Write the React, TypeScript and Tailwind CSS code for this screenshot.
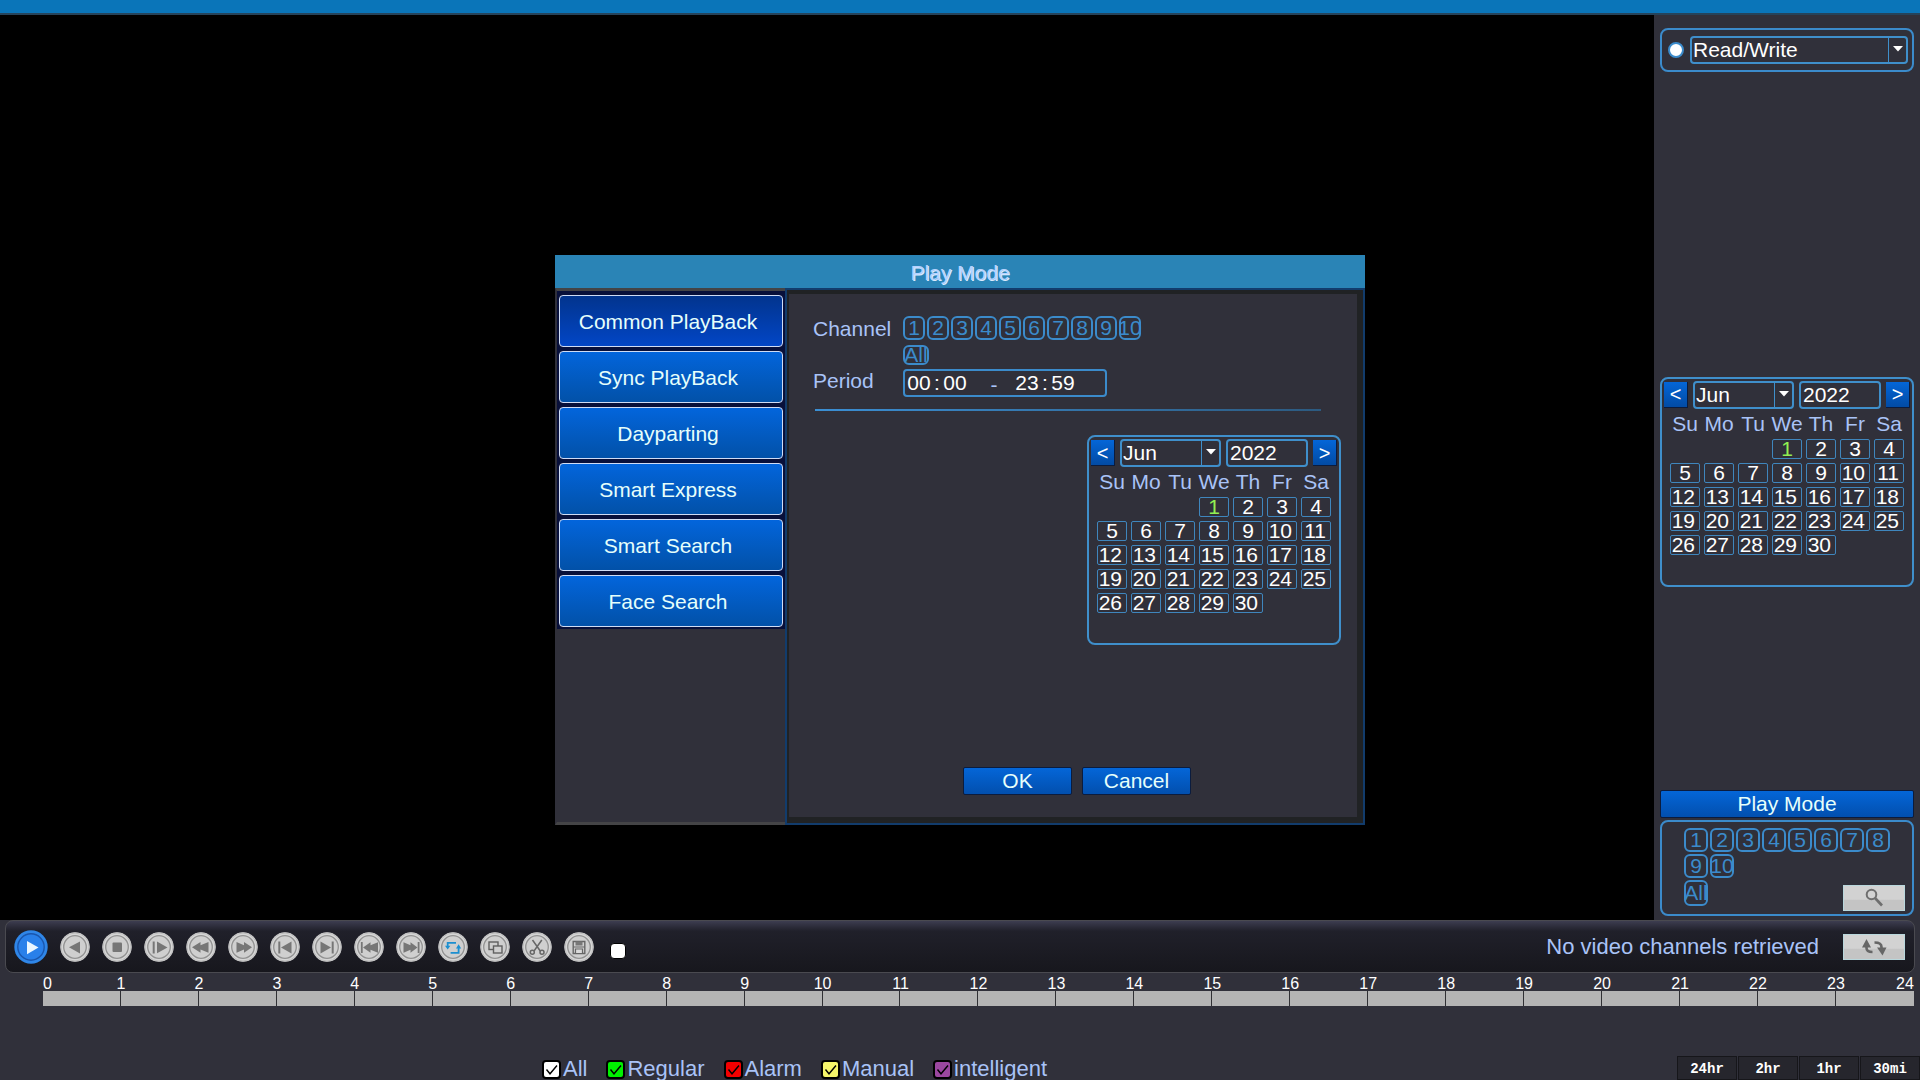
import React, { useState } from "react";

const MONTHS = ["Jan", "Feb", "Mar", "Apr", "May", "Jun", "Jul", "Aug", "Sep", "Oct", "Nov", "Dec"];
const WEEKDAYS = ["Su", "Mo", "Tu", "We", "Th", "Fr", "Sa"];
const WEEKS: (number | null)[][] = [
  [null, null, null, 1, 2, 3, 4],
  [5, 6, 7, 8, 9, 10, 11],
  [12, 13, 14, 15, 16, 17, 18],
  [19, 20, 21, 22, 23, 24, 25],
  [26, 27, 28, 29, 30, null, null],
];
const CHANNELS = ["1", "2", "3", "4", "5", "6", "7", "8", "9", "10"];
const MODES = ["Common PlayBack", "Sync PlayBack", "Dayparting", "Smart Express", "Smart Search", "Face Search"];
const HOURS = Array.from({ length: 24 }, (_, i) => i);

function Select({ label, options, value, className }: { label: string; options: string[]; value: string; className: string }) {
  return (
    <div className={`relative h-7 ${className}`}>
      <select
        aria-label={label}
        defaultValue={value}
        className="h-full w-full appearance-none rounded border-2 border-[#3f8fcb] bg-transparent pl-px text-[21px] leading-6 text-white outline-none"
      >
        {options.map((o) => (
          <option key={o} className="bg-[#30303a]">
            {o}
          </option>
        ))}
      </select>
      <span className="pointer-events-none absolute inset-y-0.5 right-0.5 flex w-[18px] items-center justify-center border-l border-[#3f8fcb]">
        <svg width="10" height="6" viewBox="0 0 10 6" className="-mt-0.5">
          <path d="M0 0h10L5 5.5z" fill="#fff" />
        </svg>
      </span>
    </div>
  );
}

function StepButton({ label, children }: { label: string; children: string }) {
  return (
    <button
      aria-label={label}
      className="flex h-[26px] w-6 items-center justify-center border-r border-b border-[#0b1c3e] bg-linear-to-b from-[#0466d8] to-[#024ba4] text-xl leading-6 text-white"
    >
      {children}
    </button>
  );
}

function Calendar() {
  return (
    <div className="h-[210px] w-[254px] rounded-lg border-2 border-[#3f8fcb] pt-0.5">
      <div className="flex items-center justify-between pr-0.5 pl-0.5">
        <StepButton label="Previous month">{"<"}</StepButton>
        <Select label="Month" options={MONTHS} value="Jun" className="w-[101px]" />
        <input
          aria-label="Year"
          defaultValue="2022"
          className="h-7 w-[82px] rounded border-2 border-[#3f8fcb] bg-transparent pl-0.5 text-[21px] leading-6 text-white outline-none"
        />
        <StepButton label="Next month">{">"}</StepButton>
      </div>
      <table className="ml-1 w-[242px] table-fixed border-separate border-spacing-1 text-[21px] leading-5">
        <thead>
          <tr>
            {WEEKDAYS.map((d) => (
              <th key={d} className="h-[22px] p-0 font-normal text-[#a9c3f7]">
                <span className="flex justify-center">{d}</span>
              </th>
            ))}
          </tr>
        </thead>
        <tbody>
          {WEEKS.map((week, i) => (
            <tr key={i}>
              {week.map((day, j) => (
                <td key={j} className="h-5 p-0">
                  {day !== null && (
                    <button
                      className={`flex h-5 w-full items-center justify-end rounded-xs border border-[#3f86bd] leading-5 ${
                        day === 1 ? "text-[#92f052]" : "text-white"
                      } ${day < 10 ? "pr-2" : "pr-1"}`}
                    >
                      {day}
                    </button>
                  )}
                </td>
              ))}
            </tr>
          ))}
        </tbody>
      </table>
    </div>
  );
}

function Chip({ label, className }: { label: string; className: string }) {
  const [on, setOn] = useState(false);
  return (
    <button
      aria-pressed={on}
      onClick={() => setOn(!on)}
      className={`flex items-center justify-center rounded-md border-2 border-[#3b8bcb] text-[21px] leading-5 text-[#3b8bcb] ${className}`}
    >
      {label}
    </button>
  );
}

function TimeField({ label, value }: { label: string; value: string }) {
  return (
    <input
      aria-label={label}
      defaultValue={value}
      className="h-6 w-6 bg-transparent text-center text-[21px] leading-6 text-white outline-none"
    />
  );
}

function PlayModeDialog() {
  return (
    <div role="dialog" aria-label="Play Mode" className="flex h-[570px] w-[810px] flex-col bg-[#30303a]">
      <h2 className="flex h-[33px] shrink-0 items-center justify-center bg-[#2a84b6] pt-0.5 text-[21px] text-[#b4d2ff] [text-shadow:1px_1px_0_#dcebff]">
        Play Mode
      </h2>
      <div className="flex grow">
        <div className="w-[230px] shrink-0 border-t-[3px] border-b-[3px] border-l-2 border-t-[#444446] border-b-[#444446] border-l-[#30303a]">
          <ul className="flex flex-col gap-1 bg-[#08103a] px-0.5 pt-1 pb-0.5">
            {MODES.map((m, i) => (
              <li key={m}>
                <button
                  className={`h-[52px] w-full rounded border border-[#cfdcf5] bg-linear-to-b pt-0.5 pr-1.5 text-[21px] leading-6 text-[#e6fffb] ${
                    i === 0 ? "from-[#02348e] to-[#0246c6]" : "from-[#0365dc] to-[#0251a8]"
                  }`}
                >
                  {m}
                </button>
              </li>
            ))}
          </ul>
        </div>
        <div className="flex grow flex-col border-2 border-[#123c6c]">
          <div className="flex grow flex-col border-t-4 border-r-[6px] border-b-[6px] border-l-2 border-[#202224] pt-[22px] pr-4 pb-[22px] pl-6">
            <div className="grid grid-cols-[90px_1fr] gap-y-1 text-[21px] leading-6 text-[#a9c3f7]">
              <span className="pt-px">Channel</span>
              <div className="flex h-6 gap-0.5">
                {CHANNELS.map((c) => (
                  <Chip key={c} label={c} className="h-6 w-[22px]" />
                ))}
              </div>
              <Chip label="All" className="col-start-2 h-5 w-[26px]" />
              <span>Period</span>
              <div className="flex h-7 w-[204px] items-center rounded border-2 border-[#3b8bcb] pl-0.5">
                <TimeField label="Start hour" value="00" />
                <span className="w-3 text-center text-white">:</span>
                <TimeField label="Start minute" value="00" />
                <span className="w-12 pt-1 pl-1.5 text-center">-</span>
                <TimeField label="End hour" value="23" />
                <span className="w-3 text-center text-white">:</span>
                <TimeField label="End minute" value="59" />
              </div>
            </div>
            <hr className="mt-3 mr-5 ml-0.5 h-0.5 border-0 bg-linear-to-r from-[#3b8fd4] to-[#2c5a80]" />
            <div className="mt-6 flex justify-end">
              <Calendar />
            </div>
            <div className="mt-auto flex justify-center gap-2.5">
              <button className="h-7 w-[109px] rounded-xs border border-[#0b1c3e] bg-linear-to-b from-[#0466d8] to-[#024fae] text-[21px] leading-6 text-[#e6fffb]">
                OK
              </button>
              <button className="h-7 w-[109px] rounded-xs border border-[#0b1c3e] bg-linear-to-b from-[#0466d8] to-[#024fae] text-[21px] leading-6 text-[#e6fffb]">
                Cancel
              </button>
            </div>
          </div>
        </div>
      </div>
    </div>
  );
}

const G = "#767676";
const CONTROLS: { label: string; glyph: React.ReactNode }[] = [
  { label: "Reverse", glyph: <path d="M9 15.3 20 9.6v11.8z" fill={G} /> },
  { label: "Stop", glyph: <rect x="10.5" y="10.5" width="9.5" height="9.5" rx="1" fill={G} /> },
  {
    label: "Slow play",
    glyph: (
      <>
        <path d="M9.7 9.5v12" stroke={G} strokeWidth="2" />
        <path d="M13 9.5 23.5 15.4 13 21.3z" fill={G} />
      </>
    ),
  },
  { label: "Rewind", glyph: <path d="M6 15.3 14.5 10v3.2L22.5 10v10.8l-8-3.2v3.2z" fill={G} /> },
  { label: "Fast forward", glyph: <path d="M24 15.3 16 10v3.2L8.5 10v10.8l7.5-3.2v3.2z" fill={G} /> },
  {
    label: "Previous frame",
    glyph: (
      <>
        <path d="M9.3 9.5v12" stroke={G} strokeWidth="2" />
        <path d="M11 15.4 21.5 9.6v11.8z" fill={G} />
      </>
    ),
  },
  {
    label: "Next frame",
    glyph: (
      <>
        <path d="M20.7 9.5v12" stroke={G} strokeWidth="2" />
        <path d="M19 15.4 8.5 9.6v11.8z" fill={G} />
      </>
    ),
  },
  {
    label: "Previous file",
    glyph: (
      <>
        <path d="M7.8 10v11" stroke={G} strokeWidth="1.8" />
        <path d="M9 15.4 16.5 10.2v3L24 10.2v10.5l-7.5-3v3z" fill={G} />
      </>
    ),
  },
  {
    label: "Next file",
    glyph: (
      <>
        <path d="M22.6 10v11" stroke={G} strokeWidth="1.8" />
        <path d="M21.5 15.4 14.5 10.2v3L7.5 10.2v10.5l7-3v3z" fill={G} />
      </>
    ),
  },
  {
    label: "Repeat",
    glyph: (
      <>
        <path d="M9.7 14v-3.2h8.3M20.6 16v4.8h-8" fill="none" stroke="#1c8fd0" strokeWidth="1.8" />
        <path d="M7 13.8h5.4L9.7 17.6zM18 16.4h5.2l-2.6-4.2z" fill="#1c8fd0" />
      </>
    ),
  },
  {
    label: "Full screen",
    glyph: (
      <>
        <rect x="9" y="10" width="9" height="7.5" fill="#cfcfcf" stroke="#606060" strokeWidth="1.4" />
        <rect x="13.5" y="14" width="8.5" height="7" fill="#cfcfcf" stroke="#606060" strokeWidth="1.4" />
      </>
    ),
  },
  {
    label: "Clip",
    glyph: (
      <g fill="none" stroke="#666" strokeWidth="1.5">
        <path d="M10.5 8 18.3 19M19.8 8 12 19" />
        <circle cx="10.3" cy="20.3" r="2" />
        <circle cx="20" cy="20.3" r="2" />
      </g>
    ),
  },
  {
    label: "Save",
    glyph: (
      <>
        <path d="M9.2 9.5h11.6v12H9.2z" fill="#cfcfcf" stroke="#666" strokeWidth="1.4" />
        <path d="M11.5 9.5h7v4h-7z" fill="#777" />
        <path d="M9.2 15h11.6M11.5 17h7v4.5h-7z" fill="#dadada" stroke="#666" strokeWidth="1.2" />
      </>
    ),
  },
];

function ControlButton({ label, glyph }: { label: string; glyph: React.ReactNode }) {
  return (
    <button aria-label={label} className="shrink-0">
      <svg width="30" height="30" viewBox="0 0 30 30">
        <circle cx="15" cy="15" r="14.7" fill="#d6d6d6" />
        <circle cx="15" cy="15" r="14" fill="none" stroke="#bcbcbc" strokeWidth="1" />
        <circle cx="15" cy="15" r="11.3" fill="#cfcfcf" stroke="#929292" strokeWidth="1.3" />
        {glyph}
      </svg>
    </button>
  );
}

function LegendItem({ label, box }: { label: string; box: string }) {
  return (
    <label className="flex items-center gap-0.5">
      <span className="relative flex">
        <input
          type="checkbox"
          defaultChecked
          className={`peer h-[19px] w-[19px] appearance-none rounded border-2 border-black ${box}`}
        />
        <svg width="19" height="19" viewBox="0 0 19 19" className="pointer-events-none absolute inset-0 hidden peer-checked:block">
          <path d="M4.5 9.5 8 13.8 15 5.5" fill="none" stroke="#000" strokeWidth="1.4" />
        </svg>
      </span>
      {label}
    </label>
  );
}

function Sidebar() {
  return (
    <aside className="flex w-[266px] shrink-0 flex-col bg-[#30303a] px-1.5 pt-[13px] pb-1">
      <div className="flex h-11 items-center gap-1.5 rounded-lg border-2 border-[#3b8bcb] pr-1 pl-1.5">
        <input
          type="radio"
          aria-label="Use Read/Write disk"
          defaultChecked
          className="h-4 w-4 shrink-0 appearance-none rounded-full border-2 border-[#3b8bcb] bg-white"
        />
        <Select label="Disk" options={["Read/Write", "Redundant"]} value="Read/Write" className="grow" />
      </div>
      <div className="grow-3" />
      <Calendar />
      <div className="grow-2" />
      <button className="h-7 rounded-xs border border-[#0b1c3e] bg-linear-to-b from-[#0466d8] to-[#024fae] text-[21px] leading-6 text-[#e6fffb]">
        Play Mode
      </button>
      <div className="relative mt-0.5 h-24 rounded-lg border-2 border-[#3b8bcb] pt-1.5 pl-[22px]">
        <div className="flex w-[208px] flex-wrap gap-0.5">
          {CHANNELS.map((c) => (
            <Chip key={c} label={c} className="h-6 w-6" />
          ))}
        </div>
        <Chip label="All" className="mt-0.5 h-[26px] w-6" />
        <button
          aria-label="Search"
          className="absolute right-[7px] bottom-[3px] flex h-[26px] w-[62px] items-center justify-center border border-[#b9d7dc] bg-linear-to-b from-[#d2d2d2] from-55% to-[#c4c4c4] to-60%"
        >
          <svg width="20" height="20" viewBox="0 0 20 20" fill="none" stroke="#6e6e6e">
            <circle cx="7.5" cy="6.5" r="4.8" strokeWidth="2" />
            <path d="m11 10 7 7.5" strokeWidth="2.6" />
          </svg>
        </button>
      </div>
    </aside>
  );
}

export default function App() {
  return (
    <div className="flex min-h-screen flex-col overflow-hidden bg-[#30303a] font-['Liberation_Sans',Arial,sans-serif]">
      <header className="h-[15px] shrink-0 border-b-2 border-[#26435a] bg-[#0a75b9]" />
      <div className="flex grow">
        <main className="grow bg-black" />
        <Sidebar />
      </div>

      <footer className="shrink-0">
        <div className="mx-[5px] flex h-[53px] items-center rounded-lg border border-[#4a4a50] bg-linear-to-b from-[#3d3d50] via-[#20202a] via-20% to-[#17171d] pr-[9px] pl-2">
          <div className="flex items-center gap-3">
            <button aria-label="Play">
              <svg width="34" height="34" viewBox="0 0 34 34">
                <circle cx="17" cy="17" r="16.7" fill="#2f86e8" />
                <circle cx="17" cy="17" r="13.2" fill="#2980ea" stroke="#1a56ad" strokeWidth="1.4" />
                <path d="M13 11 24.5 17.5 13 24.3z" fill="#eaf6ff" />
              </svg>
            </button>
            {CONTROLS.map((c) => (
              <ControlButton key={c.label} label={c.label} glyph={c.glyph} />
            ))}
            <input
              type="checkbox"
              aria-label="Sync"
              className="mt-2 ml-1 h-4 w-4 appearance-none rounded border border-black bg-white"
            />
          </div>
          <p className="ml-auto text-[22px] leading-6 text-[#a9c3f7]">No video channels retrieved</p>
          <button
            aria-label="Refresh"
            className="ml-6 flex h-[26px] w-[62px] items-center justify-center border border-[#b9d7dc] bg-linear-to-b from-[#d2d2d2] from-55% to-[#c4c4c4] to-60%"
          >
            <svg width="26" height="18" viewBox="0 0 26 18">
              <path d="M5.500 7v3c0 3 2 4 6 4" fill="none" stroke="#666" strokeWidth="2.600" />
              <path d="M1 9.500 5.500 1l4.500 8.500z" fill="#666" />
              <path d="M13.500 4.500c4.500 0 7 1.200 7 4.500v2" fill="none" stroke="#666" strokeWidth="2.600" />
              <path d="M16 9.500h9.500L21.500 17.500z" fill="#666" />
            </svg>
          </button>
        </div>

        <div className="mr-1.5 ml-[43px] flex pt-[3px]">
          {HOURS.map((h) => (
            <div key={h} className="min-w-0 flex-1">
              <div className="flex h-[15px] justify-between text-base leading-4 text-white">
                <span className={h === 0 ? "" : "flex w-0 justify-center"}>{h}</span>
                {h === 23 && <span>24</span>}
              </div>
              <div className={`h-[15px] bg-[#b4b4b4] ${h === 23 ? "" : "border-r border-[#303034]"}`} />
            </div>
          ))}
        </div>

        <div className="mt-[49px] flex h-[25px] items-end">
          <div className="ml-[542px] flex gap-[19px] text-[22px] leading-[22px] text-[#a9c3f7]">
            <LegendItem label="All" box="bg-white" />
            <LegendItem label="Regular" box="bg-[#00f000]" />
            <LegendItem label="Alarm" box="bg-[#f40000]" />
            <LegendItem label="Manual" box="bg-[#f5f56a]" />
            <LegendItem label="intelligent" box="bg-[#9b479f]" />
          </div>
          <div className="ml-auto flex gap-px font-['Liberation_Mono',monospace] text-sm font-bold text-white">
            {["24hr", "2hr", "1hr", "30mi"].map((z) => (
              <button key={z} className="h-6 w-[60px] border border-[#16161a] bg-[#26262d] pt-px">
                {z}
              </button>
            ))}
          </div>
        </div>
      </footer>

      <div className="fixed inset-0 flex items-center justify-center">
        <PlayModeDialog />
      </div>
    </div>
  );
}
